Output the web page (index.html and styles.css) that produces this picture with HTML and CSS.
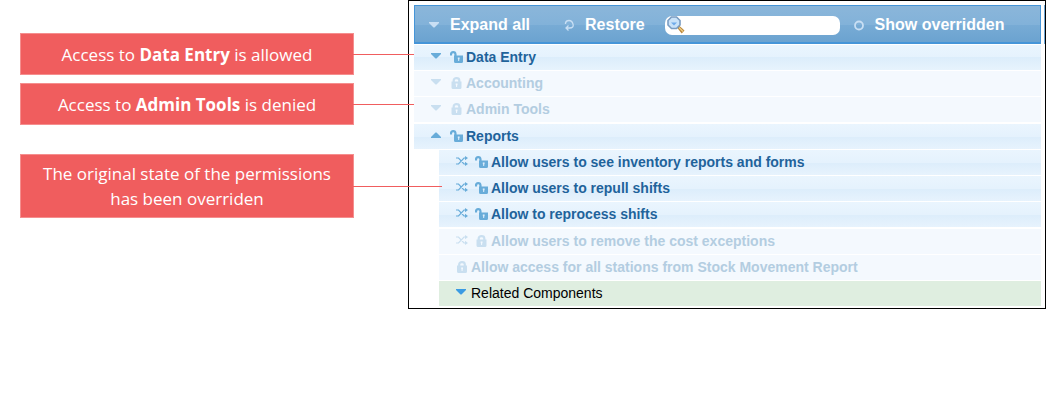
FILE: index.html
```html
<!DOCTYPE html>
<html lang="en">
<head>
<meta charset="utf-8">
<title>Permissions</title>
<link rel="stylesheet" href="styles.css">
</head>
<body>
<svg class="sprite" aria-hidden="true">
  <symbol id="down" viewBox="0 0 10 6"><path d="M0 0h10v1L5.500 5.500h-1L0 1z"/></symbol>
  <symbol id="up" viewBox="0 0 10 6"><path d="M0 6h10V5L5.500 .5h-1L0 5z"/></symbol>
  <symbol id="open" viewBox="0 0 13 12"><path fill-rule="evenodd" d="M4 4.500h9v6q0 1.500-1.500 1.500h-6Q4 12 4 10.500zM7.800 6.500v1.500l.4.500V10h1V8.500l.4-.5V6.500z"/><path fill="none" stroke="currentColor" stroke-width="2.200" d="M1 4.500V3.500Q1 1.200 3.200 1.200T5.500 3.500V6"/></symbol>
  <symbol id="lock" viewBox="0 0 10 12"><path fill-rule="evenodd" d="M0 4.500h10v6Q10 12 8.500 12h-7Q0 12 0 10.500zM4.200 6.500V8l.4.500V10h1V8.500L6 8V6.500z"/><path fill="none" stroke="currentColor" stroke-width="2.200" d="M2.200 6V3.500Q2.200 1.200 5 1.200t2.800 2.300V6"/></symbol>
  <symbol id="shuffle" viewBox="0 0 12 10"><path fill="none" stroke="currentColor" stroke-width="1.200" d="M0 2h2.500L8 8h2M0 8h2.500L8 2h2"/><path d="M9 0l3 2-3 2.200zM9 5.800l3 2.200-3 2z"/></symbol>
</svg>
<main class="page">
  <div class="notes">
    <p class="note">Access to <b>Data Entry</b> is allowed</p>
    <p class="note">Access to <b>Admin Tools</b> is denied</p>
    <p class="note note-tall">The original state of the permissions<br>has been overriden</p>
  </div>
  <section class="panel">
    <div class="toolbar">
      <button class="tool tool-expand" type="button"><svg class="arrow"><use href="#down"/></svg>Expand all</button>
      <button class="tool tool-restore" type="button"><svg class="tool-icon" viewBox="0 0 10 12"><path fill="none" stroke="currentColor" stroke-width="1.300" d="M1.500 5V4Q2 1.500 5 1.500T9 5.200 5.500 9H2M4.500 6.500L2 9l2.500 2.500"/></svg>Restore</button>
      <div class="search">
        <svg class="magnifier" viewBox="0 0 18 18"><path d="M10 11.500l2-2 5.500 5-2.800 3z" fill="#b8863b"/><path d="M12 11.500l4 4" stroke="#f1cf86" stroke-width="1.300"/><path d="M4.500 1h5L13 4.500v4.500l-3.500 3.500h-5L1 9V4.500z" fill="#c9e2f8" stroke="#799cc2" stroke-width="1.600"/><path d="M4 6.500h6L7 9.500z" fill="#6eaae9"/></svg>
        <input class="search-input" type="text" aria-label="Search permissions">
      </div>
      <button class="tool" type="button"><svg class="tool-icon" viewBox="0 0 10 12"><circle cx="5" cy="6.500" r="4" fill="none" stroke="currentColor" stroke-width="1.800"/></svg>Show overridden</button>
    </div>
    <ul class="tree">
      <li class="row"><svg class="arrow"><use href="#down"/></svg><svg class="lock"><use href="#open"/></svg>Data Entry</li>
      <li class="row denied"><svg class="arrow"><use href="#down"/></svg><svg class="lock"><use href="#lock"/></svg>Accounting</li>
      <li class="row denied"><svg class="arrow"><use href="#down"/></svg><svg class="lock"><use href="#lock"/></svg>Admin Tools</li>
      <li class="group">
        <div class="row"><svg class="arrow"><use href="#up"/></svg><svg class="lock"><use href="#open"/></svg>Reports</div>
        <ul class="tree branch">
          <li class="row"><svg class="shuffle"><use href="#shuffle"/></svg><svg class="lock"><use href="#open"/></svg>Allow users to see inventory reports and forms</li>
          <li class="row"><svg class="shuffle"><use href="#shuffle"/></svg><svg class="lock"><use href="#open"/></svg>Allow users to repull shifts</li>
          <li class="row"><svg class="shuffle"><use href="#shuffle"/></svg><svg class="lock"><use href="#open"/></svg>Allow to reprocess shifts</li>
          <li class="row denied group"><svg class="shuffle"><use href="#shuffle"/></svg><svg class="lock"><use href="#lock"/></svg>Allow users to remove the cost exceptions</li>
          <li class="row denied"><svg class="lock"><use href="#lock"/></svg>Allow access for all stations from Stock Movement Report</li>
          <li class="row related"><svg class="arrow"><use href="#down"/></svg>Related Components</li>
        </ul>
      </li>
    </ul>
  </section>
</main>
</body>
</html>
```
FILE: styles.css
```css
* { box-sizing: border-box; }
body { margin: 0; background: #fff; font-family: "Liberation Sans", Arial, sans-serif; }
svg { display: block; flex: none; fill: currentColor; }
.sprite { position: absolute; width: 0; height: 0; }
.page { display: grid; grid-template-columns: 334px 1fr; column-gap: 54px; align-items: start; padding-left: 20px; }

.notes { display: flex; flex-direction: column; gap: 8px; padding-top: 33px; }
.note {
  position: relative; margin: 0; padding: 8px 0; border: 1px solid #f58e8e; background: #f05d5e; color: #fff;
  font-family: "Open Sans", "Noto Sans", sans-serif; font-size: 17px; line-height: 25px; text-align: center; white-space: nowrap;
}
.note b { font-weight: 700; }
.note::after { content: ""; position: absolute; z-index: 1; left: 100%; top: 50%; width: 61px; height: 1px; background: #f05d5e; }
.note:not(.note-tall) { padding-bottom: 7px; }
.note-tall { margin-top: 21px; padding: 6px 0; }
.note-tall::after { width: 89px; }

.panel { border: 1px solid #000; padding: 4px 4px 2px 5px; }
.toolbar {
  display: flex; align-items: center; height: 39px; padding-left: 14px;
  border: 1px solid #4595d8; border-bottom-width: 2px;
  background: linear-gradient(#8bb6da 0, #82b2d9 52%, #78abd5 52%, #6ba3d0 100%);
  box-shadow: 3px 0 0 #fff, 4px 0 0 #6fa8d6;
}
.tool {
  display: flex; align-items: center; gap: 11px; padding: 1px 0 0; border: 0; background: none; color: #fff;
  font: bold 16px/20px "Liberation Sans", Arial, sans-serif; white-space: nowrap;
}
.tool svg { color: #c9dff4; }
.tool-icon { width: 10px; height: 12px; }
.tool-expand { margin-right: 34px; }
.tool-restore { margin-right: 20px; }
.search { display: flex; align-items: center; width: 175px; height: 19px; margin: 2px 14px 0 0; padding-left: 2px; border-radius: 7px; background: #fff; }
.magnifier { width: 18px; height: 18px; }
.search-input { flex: 1; min-width: 0; height: 19px; padding: 0 6px 0 2px; border: 0; outline: 0; background: none; font: 13px "Liberation Sans", Arial, sans-serif; }

.tree { display: flex; flex-direction: column; gap: 1px; margin: 0; padding: 1px 0 0; list-style: none; }
.branch { padding-left: 25px; }
.group { margin-top: 1px; }
.row {
  display: flex; align-items: center; height: 25px; padding-left: 17px; white-space: nowrap;
  color: #1f639b; font-size: 14px; font-weight: bold; line-height: 25px;
  background: linear-gradient(#eaf5fe 0, #e5f2fd 50%, #dcedfb 50%, #e7f3fd 100%);
}
.row svg { color: #68acd9; }
.row .arrow { margin-right: 9px; margin-bottom: 4px; }
.arrow { width: 10px; height: 6px; }
.lock { width: 13px; height: 12px; margin: 0 3px 2px 0; }
.shuffle { width: 12px; height: 10px; margin: 0 7px 3px 0; }
.branch .row > .lock:first-child { width: 12px; }
.denied { background: #f4f9fe; color: #b3cde1; }
.denied svg { color: #c9dff0; }
.related { background: #dfeee0; color: #000; font-weight: normal; }
.related svg { color: #3b9be3; }
.row.related .arrow { margin-right: 5px; }
```
